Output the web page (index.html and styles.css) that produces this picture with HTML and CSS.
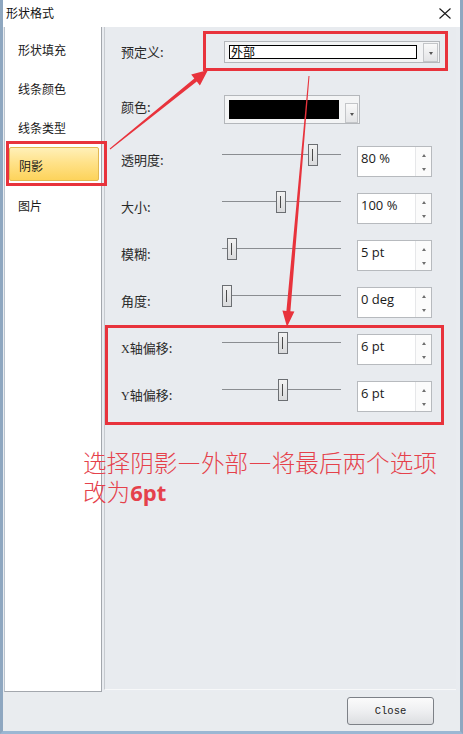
FILE: index.html
```html
<!DOCTYPE html>
<html lang="zh">
<head>
<meta charset="utf-8">
<title>形状格式</title>
<link rel="stylesheet" href="styles.css">
</head>
<body>
<div class="window">
  <div class="titlebar">
    <span class="title">形状格式</span>
    <svg class="close-x" width="12" height="11" viewBox="0 0 12 11"><path d="M0.5 0.5 L11.5 10.5 M11.5 0.5 L0.5 10.5" stroke="#1a1a1a" stroke-width="1.1" fill="none"/></svg>
  </div>
  <div class="main">
    <ul class="nav">
      <li class="nav-item">形状填充</li>
      <li class="nav-item">线条颜色</li>
      <li class="nav-item">线条类型</li>
      <li class="nav-item active"><span class="nav-btn">阴影</span></li>
      <li class="nav-item">图片</li>
    </ul>
    <div class="panel">
      <div class="row row-preset">
        <span class="label">预定义:</span>
        <div class="combo combo-preset">
          <span class="combo-field">外部</span>
          <span class="combo-btn"><i class="caret"></i></span>
        </div>
      </div>
      <div class="row row-color">
        <span class="label label-up">颜色:</span>
        <div class="combo combo-color">
          <span class="swatch"></span>
          <span class="combo-btn combo-btn-tall"><i class="caret"></i></span>
        </div>
      </div>
      <div class="row slider-row">
        <span class="label">透明度:</span>
        <div class="slider"><span class="track"></span><span class="thumb" style="left:86px"></span></div>
        <div class="spin"><span class="spin-value">80 %</span><span class="spin-arrows"><i class="up"></i><i class="down"></i></span></div>
      </div>
      <div class="row slider-row">
        <span class="label">大小:</span>
        <div class="slider"><span class="track"></span><span class="thumb" style="left:54px"></span></div>
        <div class="spin"><span class="spin-value">100 %</span><span class="spin-arrows"><i class="up"></i><i class="down"></i></span></div>
      </div>
      <div class="row slider-row">
        <span class="label">模糊:</span>
        <div class="slider"><span class="track"></span><span class="thumb" style="left:5px"></span></div>
        <div class="spin"><span class="spin-value">5 pt</span><span class="spin-arrows"><i class="up"></i><i class="down"></i></span></div>
      </div>
      <div class="row slider-row">
        <span class="label">角度:</span>
        <div class="slider"><span class="track"></span><span class="thumb" style="left:0px"></span></div>
        <div class="spin"><span class="spin-value">0 deg</span><span class="spin-arrows"><i class="up"></i><i class="down"></i></span></div>
      </div>
      <div class="row slider-row">
        <span class="label"><span class="axis">X</span>轴偏移:</span>
        <div class="slider"><span class="track"></span><span class="thumb" style="left:56px"></span></div>
        <div class="spin"><span class="spin-value">6 pt</span><span class="spin-arrows"><i class="up"></i><i class="down"></i></span></div>
      </div>
      <div class="row slider-row">
        <span class="label"><span class="axis">Y</span>轴偏移:</span>
        <div class="slider"><span class="track"></span><span class="thumb" style="left:56px"></span></div>
        <div class="spin"><span class="spin-value">6 pt</span><span class="spin-arrows"><i class="up"></i><i class="down"></i></span></div>
      </div>
    </div>
  </div>
  <div class="footer"><button class="btn-close">Close</button></div>

  <div class="mark mark-preset"></div>
  <div class="mark mark-nav"></div>
  <div class="mark mark-offset"></div>
  <svg class="arrows" width="463" height="734" viewBox="0 0 463 734">
    <polygon fill="#e8333c" points="109.7,148.6 194.3,78.5 191.2,74.6 208,70 199.9,85.5 196.8,81.6 110.3,149.4"/>
    <polygon fill="#e8333c" points="308.5,76 286.4,310.9 282.4,310.6 287,327 294.4,311.6 290.4,311.3 309.5,76"/>
  </svg>
  <div class="note">
    <span class="note-line">选择阴影—外部—将最后两个选项</span>
    <span class="note-line">改为<b class="note-bold">6pt</b></span>
  </div>
</div>
</body>
</html>
```

FILE: styles.css
```css
* { box-sizing: border-box; }

html, body {
  margin: 0;
  padding: 0;
}

body {
  background: #d3dde8;
  font-family: "Noto Sans CJK SC", "Noto Sans", sans-serif;
  color: #1e1e1e;
}

.window {
  position: relative;
  width: 463px;
  height: 734px;
  border-left: 3px solid #8ea7c0;
  border-right: 3px solid #8ea7c0;
  border-bottom: 3px solid #9bb7d3;
  background: #e9ecf0;
  display: flex;
  flex-direction: column;
}

/* Title bar */
.titlebar {
  height: 27px;
  flex: none;
  background: #ffffff;
  display: flex;
  align-items: center;
  justify-content: space-between;
  padding: 0 9px 1px 3px;
}

.title {
  font-size: 12px;
  line-height: 14px;
  color: #111;
}

.close-x {
  display: block;
  margin-top: 1px;
}

/* Main area */
.main {
  height: 665px;
  flex: none;
  display: flex;
  padding-left: 1px;
}

.nav {
  list-style: none;
  margin: 0;
  padding: 3px 0 0 0;
  width: 98px;
  height: 665px;
  background: #ffffff;
  border-left: 1px solid #b9c2cc;
  border-right: 1px solid #a3a7ad;
  border-bottom: 1px solid #a3a7ad;
}

.nav-item {
  height: 39px;
  line-height: 39px;
  font-size: 12px;
  padding-left: 13px;
  color: #1a1a1a;
}

.nav-item.active {
  padding-left: 0;
}

.nav-btn {
  display: block;
  margin: 0 2px 0 4px;
  height: 34px;
  line-height: 36px;
  padding-left: 9px;
  background: linear-gradient(#fff0b8 0%, #ffe28a 45%, #fdd35b 100%);
  border: 1px solid #e2b851;
  border-radius: 2px;
}

.panel {
  width: 352px;
  height: 663px;
  margin-left: 2px;
  background: #e8ebef;
  border-left: 1px solid #c6cacf;
  border-bottom: 1px solid #f7f8f9;
  padding-left: 15px;
}

.row {
  display: flex;
  align-items: center;
}

.label {
  width: 102px;
  flex: none;
  font-size: 13px;
  line-height: 16px;
  color: #2a2a2a;
  padding-left: 1px;
}

.axis {
  font-family: "Liberation Serif", serif;
  font-size: 12px;
}

.label-up {
  margin-top: -6px;
}

.row-preset {
  margin-top: 14px;
  height: 22px;
}

.row-preset .label,
.row-color .label {
  width: 104px;
}

.row-color {
  margin-top: 32px;
  height: 29px;
}

/* Combos */
.combo {
  display: flex;
  align-items: flex-start;
  border: 1px solid #b4b7bb;
  background: #f3f4f5;
  padding: 1px 0 0 4px;
  gap: 6px;
}

.combo-preset {
  width: 216px;
  height: 22px;
}

.combo-field {
  margin-top: 2px;
  width: 188px;
  height: 14px;
  border: 1px solid #000;
  background: #fff;
  font-size: 12px;
  line-height: 12px;
  padding-left: 1px;
  color: #000;
}

.combo-btn {
  width: 15px;
  height: 19px;
  border: 1px solid #c3c5c8;
  background: linear-gradient(#f9f9f9, #e3e4e6);
  display: flex;
  align-items: center;
  justify-content: center;
}

.combo-btn-tall {
  width: 13px;
  height: 20px;
  margin-top: 3px;
}

.caret {
  display: block;
  width: 0;
  height: 0;
  border-left: 2.5px solid transparent;
  border-right: 2.5px solid transparent;
  border-top: 3px solid #555;
  margin-top: 2px;
}

.combo-color {
  width: 136px;
  height: 29px;
  padding-top: 4px;
}

.swatch {
  width: 110px;
  height: 19px;
  background: #000;
}

/* Slider rows */
.slider-row {
  height: 31px;
  margin-top: 16px;
}

.slider-row:nth-child(3) {
  margin-top: 22px;
}

.slider-row .label {
  margin-top: -3px;
}

.slider {
  position: relative;
  width: 119px;
  height: 31px;
  flex: none;
  margin-right: 16px;
}

.track {
  position: absolute;
  left: 0;
  right: 0;
  top: 8px;
  height: 1px;
  background: #8a8d91;
}

.thumb {
  position: absolute;
  top: -2px;
  width: 10px;
  height: 22px;
  border: 1px solid #6b6e72;
  background: linear-gradient(#f2f2f2, #d9dadc);
}

.thumb::after {
  content: "";
  position: absolute;
  left: 3px;
  top: 4px;
  width: 1px;
  height: 12px;
  background: #4a4a4a;
}

/* Spin boxes */
.spin {
  width: 75px;
  height: 31px;
  flex: none;
  display: flex;
  border: 1px solid #b7babe;
  background: #fff;
}

.spin-value {
  flex: 1;
  font-family: "Open Sans", "Noto Sans", sans-serif;
  font-size: 13px;
  line-height: 17px;
  padding: 3px 0 0 3px;
  color: #1a1a1a;
}

.spin-arrows {
  width: 16px;
  flex: none;
  border-left: 1px solid #e6e7e9;
  background: #fbfbfb;
  display: flex;
  flex-direction: column;
  align-items: center;
  padding-top: 7px;
}

.spin-arrows .up,
.spin-arrows .down {
  display: block;
  width: 0;
  height: 0;
  border-left: 2.5px solid transparent;
  border-right: 2.5px solid transparent;
}

.spin-arrows .up {
  border-bottom: 3px solid #6e6e6e;
}

.spin-arrows .down {
  border-top: 3px solid #6e6e6e;
  margin-top: 11px;
}

/* Footer */
.footer {
  flex: 1;
  display: flex;
  justify-content: flex-end;
  align-items: flex-start;
  padding: 5px 26px 0 0;
  background: #e9ecef;
}

.btn-close {
  width: 87px;
  height: 28px;
  border: 1px solid #7d8187;
  border-radius: 3px;
  background: linear-gradient(#fbfbfb 0%, #eeeff1 50%, #dcdee1 100%);
  font-family: "Liberation Mono", monospace;
  font-size: 10.5px;
  color: #222;
  padding: 0;
}

/* Annotation overlay */
.mark {
  position: absolute;
  border: 3px solid #e8333c;
}

.mark-preset {
  left: 200px;
  top: 31px;
  width: 245px;
  height: 40px;
}

.mark-nav {
  left: 3px;
  top: 141px;
  width: 101px;
  height: 45px;
}

.mark-offset {
  left: 102px;
  top: 325px;
  width: 339px;
  height: 100px;
}

.arrows {
  position: absolute;
  left: -3px;
  top: 0;
  pointer-events: none;
}

.note {
  position: absolute;
  left: 80px;
  top: 448px;
  display: flex;
  flex-direction: column;
  gap: 1px;
  font-size: 23.6px;
  font-weight: 300;
  color: #e5414b;
  white-space: nowrap;
}

.note-line {
  display: block;
  height: 28px;
  line-height: 28px;
  overflow: visible;
}

.note-bold {
  font-family: "Open Sans", "Noto Sans", sans-serif;
  font-weight: 700;
  font-size: 22px;
  line-height: 26px;
}
```
